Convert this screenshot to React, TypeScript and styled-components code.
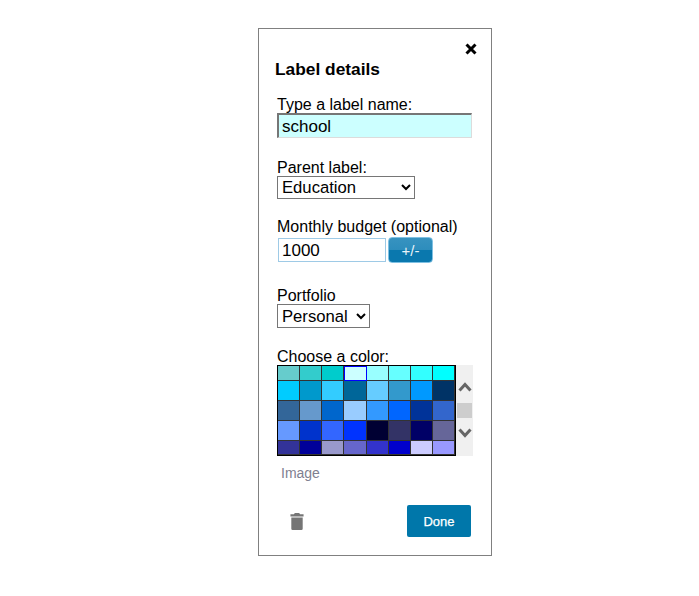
import React from "react";
import styled, { createGlobalStyle } from "styled-components";

const GlobalStyle = createGlobalStyle`
  html, body {
    margin: 0;
    background: #fff;
    font-family: "Liberation Sans", Arial, sans-serif;
  }
`;

const Page = styled.div`
  width: 699px;
  height: 596px;
  padding: 28px 0 0 258px;
  box-sizing: border-box;
  display: flex;
`;

const Dialog = styled.div`
  position: relative;
  width: 234px;
  height: 528px;
  box-sizing: border-box;
  border: 1px solid #808080;
  padding: 31px 19px 0 16px;
  color: #000;
`;

const CloseButton = styled.button`
  position: absolute;
  top: 13px;
  right: 13px;
  width: 14px;
  height: 14px;
  padding: 0;
  border: 0;
  background: none;
  display: flex;
`;

const Title = styled.h2`
  margin: 0 0 16px;
  font-size: 17.33px;
  line-height: 19px;
  font-weight: 700;
`;

const Field = styled.div<{ $gap: number }>`
  margin-bottom: ${(p) => p.$gap}px;
  padding-left: 2px;
`;

const Label = styled.label`
  display: block;
  font-size: 16px;
  line-height: 20px;
  margin-bottom: -2px;
`;

const NameInput = styled.input`
  display: block;
  width: 195px;
  height: 25px;
  box-sizing: border-box;
  padding: 1px 3px 0;
  border-style: solid;
  border-width: 2px 1px 1px 2px;
  border-color: #767676 #dcdcdc #dcdcdc #767676;
  background: #ccffff;
  font: 17px "Liberation Sans", Arial, sans-serif;
  color: #000;
  outline: none;
`;

const Select = styled.select<{ $width: number; $height: number }>`
  display: block;
  width: ${(p) => p.$width}px;
  height: ${(p) => p.$height}px;
  box-sizing: border-box;
  border: 1px solid #767676;
  border-radius: 0;
  background: #fff;
  font: 16.67px "Liberation Sans", Arial, sans-serif;
  color: #000;
  padding: 0;
  outline: none;
`;

const BudgetRow = styled.div`
  display: flex;
  align-items: center;
  margin-top: 2px;
`;

const BudgetInput = styled.input`
  width: 108px;
  height: 24px;
  margin-left: 1px;
  box-sizing: border-box;
  padding: 1px 3px 0;
  border: 1px solid #9ecae6;
  font: 17px "Liberation Sans", Arial, sans-serif;
  color: #000;
  outline: none;
`;

const StepButton = styled.button`
  width: 45px;
  height: 26px;
  margin-left: 2px;
  box-sizing: border-box;
  padding: 0;
  border: 1px solid #7fc0e2;
  border-radius: 4px;
  background: linear-gradient(to bottom, #3793c0 0, #2d8dbc 50%, #0a78ae 50%, #0a78ae 100%);
  color: #e8f3f9;
  font: 15px "Liberation Sans", Arial, sans-serif;
`;

const PickerRow = styled.div`
  display: flex;
  height: 91px;
`;

const SwatchGrid = styled.div`
  flex: none;
  width: 179px;
  height: 91px;
  box-sizing: border-box;
  border: 1px solid #000;
  display: grid;
  grid-template-columns: repeat(8, 1fr);
  grid-template-rows: 15px 20px 20px 20px 14px;
  background: #333;
`;

const Swatch = styled.div<{ $color: string; $selected?: boolean }>`
  background: ${(p) => p.$color};
  border: 1px solid ${(p) => (p.$selected ? "#0000ff" : "#333")};
  border-width: ${(p) => (p.$selected ? "1px" : "0 1px 1px 0")};
`;

const ScrollTrack = styled.div`
  flex: none;
  width: 17px;
  height: 91px;
  background: #f0f0f0;
  display: flex;
  flex-direction: column;
  align-items: center;
  padding-top: 17px;
  box-sizing: border-box;
`;

const ScrollThumb = styled.div`
  width: 15px;
  height: 15px;
  margin: 11px 0 10px;
  background: #cdcdcd;
`;

const ImageLink = styled.div`
  margin: 9px 0 0 6px;
  font-size: 14px;
  line-height: 16px;
  color: #808090;
`;

const Footer = styled.div`
  display: flex;
  justify-content: space-between;
  align-items: center;
  margin-top: 24px;
  padding-left: 15px;
`;

const DoneButton = styled.button`
  width: 64px;
  height: 32px;
  margin-right: 1px;
  padding: 0;
  border: 0;
  border-radius: 2px;
  background: #0077aa;
  color: #fff;
  font: 13px "Liberation Sans", Arial, sans-serif;
  -webkit-text-stroke: 0.25px #fff;
`;

const swatches = [
  ["#66cccc", "#33cccc", "#00cccc", "#ccffff", "#99ffff", "#66ffff", "#33ffff", "#00ffff"],
  ["#00ccff", "#0099cc", "#33ccff", "#006699", "#66ccff", "#3399cc", "#0099ff", "#003366"],
  ["#336699", "#6699cc", "#0066cc", "#99ccff", "#3399ff", "#0066ff", "#003399", "#3366cc"],
  ["#6699ff", "#0033cc", "#3366ff", "#0033ff", "#000033", "#333366", "#000066", "#666699"],
  ["#333399", "#000099", "#9999cc", "#6666cc", "#3333cc", "#0000cc", "#ccccff", "#9999ff"],
];

const Chevron = ({ up }: { up?: boolean }) => (
  <svg width="14" height="10" viewBox="0 0 14 10">
    <path d={up ? "M1.500 8.500 7 2.500l5.500 6" : "M1.500 1.500 7 7.500l5.500-6"} fill="none" stroke="#666" strokeWidth="3" />
  </svg>
);

const App = () => {
  return (
    <>
      <GlobalStyle />
      <Page>
        <Dialog>
          <CloseButton aria-label="Close">
            <svg width="14" height="14" viewBox="0 0 14 14">
              <path d="M2.500 2.500l9 9M11.500 2.500l-9 9" stroke="#000" strokeWidth="3" />
            </svg>
          </CloseButton>
          <Title>Label details</Title>
          <Field $gap={20}>
            <Label>Type a label name:</Label>
            <NameInput defaultValue="school" />
          </Field>
          <Field $gap={18}>
            <Label>Parent label:</Label>
            <Select $width={138} $height={23} defaultValue="Education">
              <option>Education</option>
            </Select>
          </Field>
          <Field $gap={23}>
            <Label>Monthly budget (optional)</Label>
            <BudgetRow>
              <BudgetInput defaultValue="1000" />
              <StepButton>+/-</StepButton>
            </BudgetRow>
          </Field>
          <Field $gap={19}>
            <Label>Portfolio</Label>
            <Select $width={93} $height={24} defaultValue="Personal">
              <option>Personal</option>
            </Select>
          </Field>
          <Field $gap={0}>
            <Label>Choose a color:</Label>
            <PickerRow>
              <SwatchGrid>
                {swatches.flat().map((color, i) => (
                  <Swatch key={i} $color={color} $selected={i === 3} />
                ))}
              </SwatchGrid>
              <ScrollTrack>
                <Chevron up />
                <ScrollThumb />
                <Chevron />
              </ScrollTrack>
            </PickerRow>
          </Field>
          <ImageLink>Image</ImageLink>
          <Footer>
            <svg width="14" height="18" viewBox="0 0 16 20" preserveAspectRatio="none">
              <path d="M5.500 1h5l1 1.500H15.500V5H.5V2.500H4.500zM1.500 6h13v12.500a1.500 1.500 0 0 1-1.500 1.500H3a1.500 1.500 0 0 1-1.500-1.500z" fill="#757575" />
            </svg>
            <DoneButton>Done</DoneButton>
          </Footer>
        </Dialog>
      </Page>
    </>
  );
};

export default App;
